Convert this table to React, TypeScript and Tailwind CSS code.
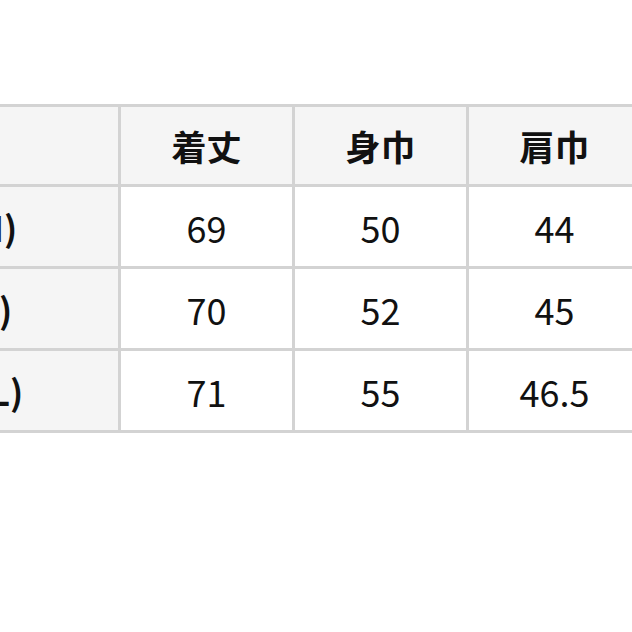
import React from "react";

const headers = ["着丈", "身巾", "肩巾"];
const rows = [
  { label: "(M)", v: ["69", "50", "44"] },
  { label: "(L)", v: ["70", "52", "45"] },
  { label: "(XL)", v: ["71", "55", "46.5"] },
];

export default function App() {
  return (
    <div
      className="w-[632px] h-[632px] overflow-hidden bg-white pt-[104px]"
      style={{ fontFamily: '"Noto Sans CJK JP", "Noto Sans", sans-serif' }}
    >
      <div className="-ml-[143px] w-max grid grid-cols-[258px_171px_171px_171px] grid-rows-[77px_79px_79px_79px] gap-[3px] p-[3px] bg-[#d3d3d3]">
        <div className="bg-[#f5f5f5]" />
        {headers.map((h) => (
          <div
            key={h}
            className="bg-[#f5f5f5] flex items-center justify-center text-[35px] font-bold text-[#111] leading-none"
          >
            {h}
          </div>
        ))}
        {rows.map((r) => (
          <React.Fragment key={r.label}>
            <div className="bg-[#f5f5f5] flex items-center justify-center text-[35px] font-bold text-[#111] leading-none">
              {r.label}
            </div>
            {r.v.map((x, i) => (
              <div
                key={i}
                className="bg-white flex items-center justify-center text-[36px] text-[#111] leading-none"
              >
                {x}
              </div>
            ))}
          </React.Fragment>
        ))}
      </div>
    </div>
  );
}
